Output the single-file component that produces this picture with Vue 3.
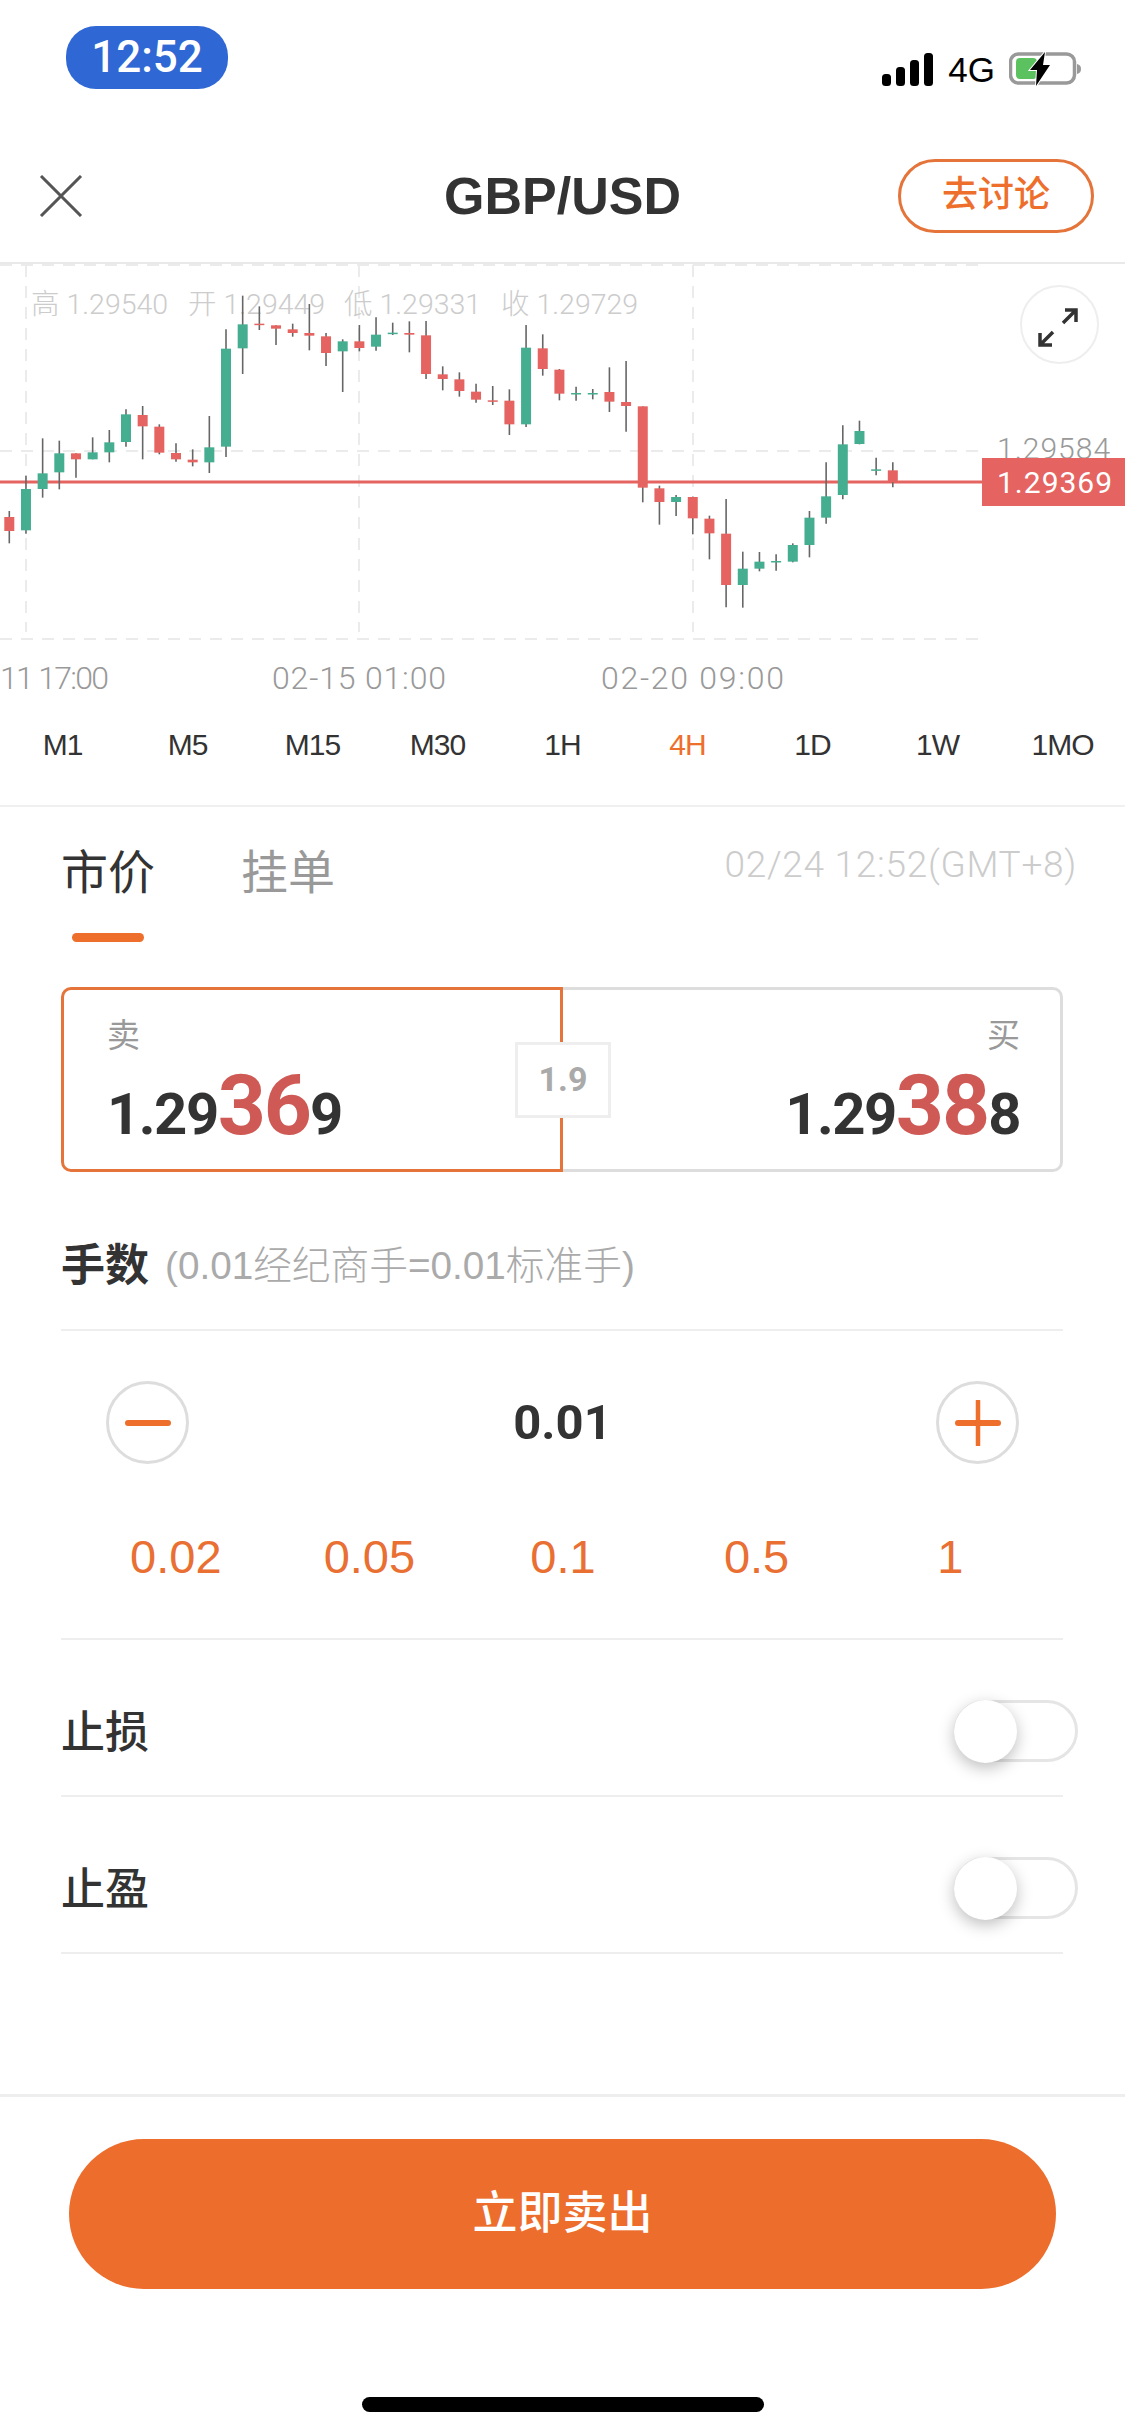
<template>
  <div class="page">
    <div class="status">
      <div class="clock">12:52</div>
      <div class="status-right">
        <svg class="signal" width="52" height="34" viewBox="0 0 52 34">
          <rect x="0" y="21" width="9" height="12" rx="3.5" />
          <rect x="14" y="14" width="9" height="19" rx="3.5" />
          <rect x="28" y="7" width="9" height="26" rx="3.5" />
          <rect x="42" y="0" width="9" height="33" rx="3.5" />
        </svg>
        <span class="net">4G</span>
        <svg class="battery" width="73" height="36" viewBox="0 0 73 36">
          <rect x="1.5" y="2" width="64" height="29" rx="8" fill="none" stroke="#999" stroke-width="3.5" />
          <rect x="7" y="6" width="21" height="21" rx="4" fill="#5bc25f" />
          <path d="M68 12c3 .5 4 2.500 4 5s-1 4.500-4 5z" fill="#999" />
          <path d="M36 0 21 18h7l-1 16 14-21h-7z" fill="#000" stroke="#fff" stroke-width="2" paint-order="stroke" />
        </svg>
      </div>
    </div>

    <div class="header">
      <svg class="close" width="44" height="42" viewBox="0 0 44 42">
        <path d="M2 1 42 41M42 1 2 41" stroke="#555" stroke-width="3" fill="none" />
      </svg>
      <div class="title">GBP/USD</div>
      <div class="discuss">去讨论</div>
    </div>

    <div class="chart">
      <svg class="kline" width="1125" height="436" viewBox="0 264 1125 436">
        <g stroke="#ebebeb" stroke-width="2" stroke-dasharray="12 9" fill="none">
          <line v-for="y in [265, 451, 639]" :key="y" x1="0" x2="982" :y1="y" :y2="y" />
          <line v-for="x in [26, 359, 693]" :key="x" :x1="x" :x2="x" y1="265" y2="632" />
        </g>
        <g class="ohlc">
          <text v-for="o in ohlc" :key="o.label" :x="o.x" y="314">{{ o.label }} {{ o.value }}</text>
        </g>
        <line x1="0" x2="982" y1="482" y2="482" stroke="#e56461" stroke-width="3" />
        <g v-for="c in candles" :key="c.x">
          <line :x1="c.x" :x2="c.x" :y1="c.top" :y2="c.bottom" stroke="#666" stroke-width="1.600" />
          <rect :x="c.x - 5" :y="c.bodyTop" width="10" :height="c.bodyHeight" :fill="c.color" />
        </g>
        <text class="last-price" x="997" y="459">1.29584</text>
        <rect x="982" y="458" width="143" height="48" fill="#e56461" />
        <text class="tag-price" x="997" y="493">1.29369</text>
        <text v-for="t in times" :key="t.text" class="time" :x="t.x" y="689" :textLength="t.width">{{ t.text }}</text>
      </svg>
      <div class="expand">
        <svg width="79" height="79" viewBox="0 0 79 79">
          <path d="M56 25 43 38M45 25H56V37M20 60 33 47M20 48V60H32" fill="none" stroke="#333" stroke-width="3.500" />
        </svg>
      </div>
    </div>

    <div class="periods">
      <span v-for="p in periods" :key="p" class="period" :class="{ active: p === '4H' }">{{ p }}</span>
    </div>

    <div class="order">
      <div class="order-top">
        <div class="tab current">
          <span>市价</span>
          <i class="tab-bar"></i>
        </div>
        <div class="tab">挂单</div>
        <div class="stamp">02/24 12:52(GMT+8)</div>
      </div>

      <div class="quote">
        <div class="side sell">
          <div class="side-label">卖</div>
          <div class="price">1.29<b>36</b>9</div>
        </div>
        <div class="side buy">
          <div class="side-label">买</div>
          <div class="price">1.29<b>38</b>8</div>
        </div>
        <div class="spread">1.9</div>
      </div>

      <div class="lots-title">
        <span class="lots-name">手数</span>
        <span class="lots-note">(0.01经纪商手=0.01标准手)</span>
      </div>

      <div class="stepper">
        <div class="step">
          <svg width="46" height="46" viewBox="0 0 46 46">
            <path d="M3 23H43" stroke="#ee6e2c" stroke-width="6" stroke-linecap="round" />
          </svg>
        </div>
        <div class="lot-value">0.01</div>
        <div class="step">
          <svg width="46" height="46" viewBox="0 0 46 46">
            <path d="M3 23H43" stroke="#ee6e2c" stroke-width="6" stroke-linecap="round" />
            <path d="M23 1V45" stroke="#ee6e2c" stroke-width="4.500" stroke-linecap="round" />
          </svg>
        </div>
      </div>

      <div class="quick">
        <span v-for="q in quickLots" :key="q">{{ q }}</span>
      </div>

      <div v-for="name in ['止损', '止盈']" :key="name" class="row">
        <span class="row-name">{{ name }}</span>
        <div class="switch"><i class="knob"></i></div>
      </div>
    </div>

    <div class="footer">
      <div class="submit">立即卖出</div>
      <div class="home"></div>
    </div>
  </div>
</template>

<script setup>
const periods = ['M1', 'M5', 'M15', 'M30', '1H', '4H', '1D', '1W', '1MO']
const quickLots = ['0.02', '0.05', '0.1', '0.5', '1']

const ohlc = [
  { label: '高', value: '1.29540', x: 31 },
  { label: '开', value: '1.29449', x: 188 },
  { label: '低', value: '1.29331', x: 344 },
  { label: '收', value: '1.29729', x: 501 }
]

const times = [
  { text: '11 17:00', x: 0, width: 109 },
  { text: '02-15 01:00', x: 272, width: 174 },
  { text: '02-20 09:00', x: 601, width: 183 }
]

// colour, wick top, wick bottom, body top, body bottom (3x crop rows, 265 is row 0)
const raw = [
  ['r', 738, 835, 756, 798], ['g', 632, 806, 672, 796], ['g', 520, 698, 625, 672],
  ['g', 527, 673, 565, 622], ['r', 565, 638, 565, 583], ['g', 517, 583, 562, 583],
  ['g', 495, 592, 532, 562], ['g', 433, 545, 448, 531], ['r', 423, 583, 450, 484],
  ['r', 478, 568, 485, 563], ['r', 535, 590, 564, 583], ['r', 553, 604, 584, 592],
  ['g', 453, 624, 547, 592], ['g', 193, 576, 251, 545], ['g', 92, 327, 178, 250],
  ['r', 124, 195, 176, 180], ['r', 181, 240, 181, 191], ['r', 176, 215, 193, 204],
  ['r', 117, 256, 204, 212], ['r', 204, 303, 214, 264], ['g', 223, 381, 229, 259],
  ['r', 180, 259, 229, 249], ['g', 157, 257, 209, 245], ['g', 173, 210, 203, 206],
  ['r', 169, 262, 204, 209], ['r', 168, 342, 211, 327], ['r', 304, 376, 328, 342],
  ['r', 322, 395, 343, 378], ['r', 356, 413, 380, 404], ['r', 363, 420, 406, 408],
  ['r', 373, 510, 407, 478], ['g', 180, 486, 248, 478], ['r', 208, 332, 250, 312],
  ['r', 312, 406, 314, 386], ['g', 365, 407, 384, 386], ['g', 372, 403, 384, 386],
  ['r', 307, 441, 381, 410], ['r', 288, 500, 411, 423], ['r', 424, 712, 424, 668],
  ['r', 662, 779, 670, 711], ['g', 690, 753, 696, 711], ['r', 695, 808, 696, 760],
  ['r', 752, 883, 761, 805], ['r', 702, 1027, 806, 960], ['g', 860, 1028, 911, 960],
  ['g', 861, 919, 890, 911], ['g', 868, 917, 888, 890], ['g', 835, 892, 840, 890],
  ['g', 738, 877, 758, 840], ['g', 592, 776, 694, 758], ['g', 481, 703, 538, 690],
  ['g', 467, 538, 498, 537], ['g', 578, 631, 613, 616], ['r', 592, 667, 616, 652]
]

const toY = (row) => 265 + row / 3

const candles = raw.map(([kind, wickTop, wickBottom, bodyTop, bodyBottom], i) => ({
  x: 9.3 + i * 16.67,
  top: toY(wickTop),
  bottom: toY(wickBottom),
  bodyTop: toY(bodyTop),
  bodyHeight: Math.max((bodyBottom - bodyTop) / 3, 1.5),
  color: kind === 'g' ? '#45ae90' : '#e56461'
}))
</script>

<style>
html,
body {
  margin: 0;
  background: #fff;
}
</style>

<style scoped>
.page {
  position: relative;
  display: flex;
  flex-direction: column;
  width: 1125px;
  height: 2436px;
  overflow: hidden;
  background: #fff;
  color: #333;
  font-family: "Liberation Sans", "Noto Sans CJK SC", sans-serif;
}

.status {
  display: flex;
  justify-content: space-between;
  align-items: flex-start;
  height: 130px;
  padding: 26px 43px 0 66px;
  box-sizing: border-box;
}

.clock {
  width: 162px;
  height: 63px;
  border-radius: 30px;
  background: #2f68d4;
  color: #fff;
  font-family: Roboto, sans-serif;
  font-size: 44px;
  font-weight: 500;
  line-height: 63px;
  text-align: center;
}

.status-right {
  display: flex;
  align-items: center;
  gap: 14px;
  margin-top: 27px;
  height: 34px;
  color: #000;
}

.net {
  font-size: 35px;
  line-height: 34px;
}

.battery {
  display: block;
}

.header {
  position: relative;
  display: flex;
  justify-content: space-between;
  align-items: center;
  height: 134px;
  padding: 0 31px 0 39px;
  box-sizing: border-box;
  border-bottom: 2px solid #e9e9e9;
}

.title {
  position: absolute;
  left: 0;
  right: 0;
  top: 0;
  bottom: 0;
  display: flex;
  justify-content: center;
  align-items: center;
  font-size: 52px;
  font-weight: 700;
}

.discuss {
  width: 196px;
  height: 74px;
  box-sizing: border-box;
  border: 3px solid #e5743a;
  border-radius: 37px;
  color: #ee6e2c;
  font-size: 36px;
  font-weight: 500;
  line-height: 66px;
  text-align: center;
}

.chart {
  position: relative;
  height: 436px;
}

.kline {
  display: block;
}

.ohlc text {
  fill: #ccc;
  font-family: Roboto, "Noto Sans CJK SC", sans-serif;
  font-size: 28.500px;
  font-weight: 300;
}

.last-price {
  fill: #999;
  font-family: Roboto, sans-serif;
  font-size: 30px;
  font-weight: 300;
  letter-spacing: 1px;
}

.tag-price {
  fill: #fff;
  font-family: Roboto, sans-serif;
  font-size: 30px;
  letter-spacing: 1px;
}

.time {
  fill: #999;
  font-family: Roboto, sans-serif;
  font-size: 32px;
  font-weight: 300;
}

.expand {
  position: absolute;
  top: 21px;
  right: 26px;
  width: 79px;
  height: 79px;
  box-sizing: border-box;
  border: 2px solid #eee;
  border-radius: 50%;
  background: #fff;
}

.expand svg {
  display: block;
  margin: -2px;
}

.periods {
  display: grid;
  grid-template-columns: repeat(9, 125px);
  height: 107px;
  padding-bottom: 15px;
  box-sizing: border-box;
  border-bottom: 2px solid #f0f0f0;
  font-size: 30px;
  line-height: 90px;
  letter-spacing: -1px;
  text-align: center;
}

.active {
  color: #ee6e2c;
}

.order {
  display: flex;
  flex-direction: column;
  padding: 0 62px 0 61px;
}

.order-top {
  display: flex;
  align-items: flex-start;
  height: 99px;
  padding-top: 36px;
  font-size: 47px;
  line-height: 60px;
  color: #999;
}

.tab {
  display: flex;
  flex-direction: column;
  align-items: center;
  width: 94px;
  margin-right: 86px;
}

.tab.current {
  color: #333;
}

.tab-bar {
  display: block;
  width: 72px;
  height: 9px;
  margin-top: 30px;
  border-radius: 5px;
  background: #ee6e2c;
}

.stamp {
  margin-left: auto;
  margin-right: -14px;
  color: #ccc;
  font-family: Roboto, sans-serif;
  font-size: 37px;
  font-weight: 300;
  line-height: 44px;
  letter-spacing: 0.7px;
}

.quote {
  position: relative;
  display: grid;
  grid-template-columns: 502px 500px;
  height: 185px;
  margin-top: 45px;
}

.side {
  box-sizing: border-box;
  padding-top: 26px;
  border-style: solid;
  border-width: 3px;
}

.sell {
  padding-left: 43px;
  border-color: #e5743a;
  border-radius: 10px 0 0 10px;
}

.buy {
  padding-right: 40px;
  border-color: #ddd;
  border-left: 0;
  border-radius: 0 10px 10px 0;
  text-align: right;
}

.side-label {
  color: #999;
  font-size: 33px;
  line-height: 40px;
}

.price {
  margin-top: 8px;
  font-family: Roboto, sans-serif;
  font-size: 58px;
  font-weight: 700;
  line-height: 84px;
  letter-spacing: -1.500px;
}

.price b {
  color: #cf5a55;
  font-size: 84px;
  font-weight: 700;
  letter-spacing: -2px;
}

.spread {
  position: absolute;
  left: 454px;
  top: 55px;
  width: 96px;
  height: 76px;
  box-sizing: border-box;
  border: 3px solid #eee;
  background: #fff;
  color: #aaa;
  font-family: Roboto, sans-serif;
  font-size: 34px;
  font-weight: 700;
  line-height: 68px;
  text-align: center;
}

.lots-title {
  display: flex;
  align-items: center;
  gap: 16px;
  height: 60px;
  margin-top: 60px;
  padding-bottom: 37px;
  border-bottom: 2px solid #eee;
}

.lots-name {
  font-size: 44px;
  font-weight: 700;
}

.lots-note {
  color: #aaa;
  font-size: 38.700px;
  font-weight: 300;
}

.stepper {
  display: flex;
  justify-content: space-between;
  align-items: center;
  margin: 50px 44px 0 45px;
}

.step {
  display: flex;
  justify-content: center;
  align-items: center;
  width: 83px;
  height: 83px;
  box-sizing: border-box;
  border: 3px solid #ddd;
  border-radius: 50%;
}

.lot-value {
  font-family: Roboto, sans-serif;
  font-size: 49px;
  font-weight: 700;
}

.quick {
  display: grid;
  grid-template-columns: repeat(5, 1fr);
  margin: 63px 16px 0 18px;
  padding-bottom: 51px;
  color: #e96f33;
  font-size: 47px;
  line-height: 60px;
  text-align: center;
}

.row {
  display: flex;
  justify-content: space-between;
  align-items: center;
  height: 157px;
  padding-top: 26px;
  box-sizing: border-box;
  border-top: 2px solid #eee;
  font-size: 44px;
  font-weight: 500;
}

.row:last-child {
  height: 159px;
  border-bottom: 2px solid #eee;
}

.row-name {
  margin-bottom: 4px;
}

.switch {
  position: relative;
  width: 124px;
  height: 62px;
  margin-right: -15px;
  box-sizing: border-box;
  border: 3px solid #e5e5e5;
  border-radius: 31px;
}

.knob {
  position: absolute;
  left: -3px;
  top: -3px;
  width: 63px;
  height: 63px;
  border-radius: 50%;
  background: #fff;
  box-shadow: 0 5px 16px rgba(0, 0, 0, 0.26);
}

.footer {
  display: flex;
  flex-direction: column;
  align-items: center;
  margin-top: auto;
  height: 342px;
  box-sizing: border-box;
  padding-top: 42px;
  border-top: 3px solid #eee;
}

.submit {
  width: 987px;
  height: 150px;
  border-radius: 75px;
  background: #ec6d2c;
  color: #fff;
  font-size: 45px;
  font-weight: 500;
  line-height: 150px;
  text-align: center;
}

.home {
  width: 402px;
  height: 15px;
  margin-top: 108px;
  border-radius: 8px;
  background: #000;
}
</style>
